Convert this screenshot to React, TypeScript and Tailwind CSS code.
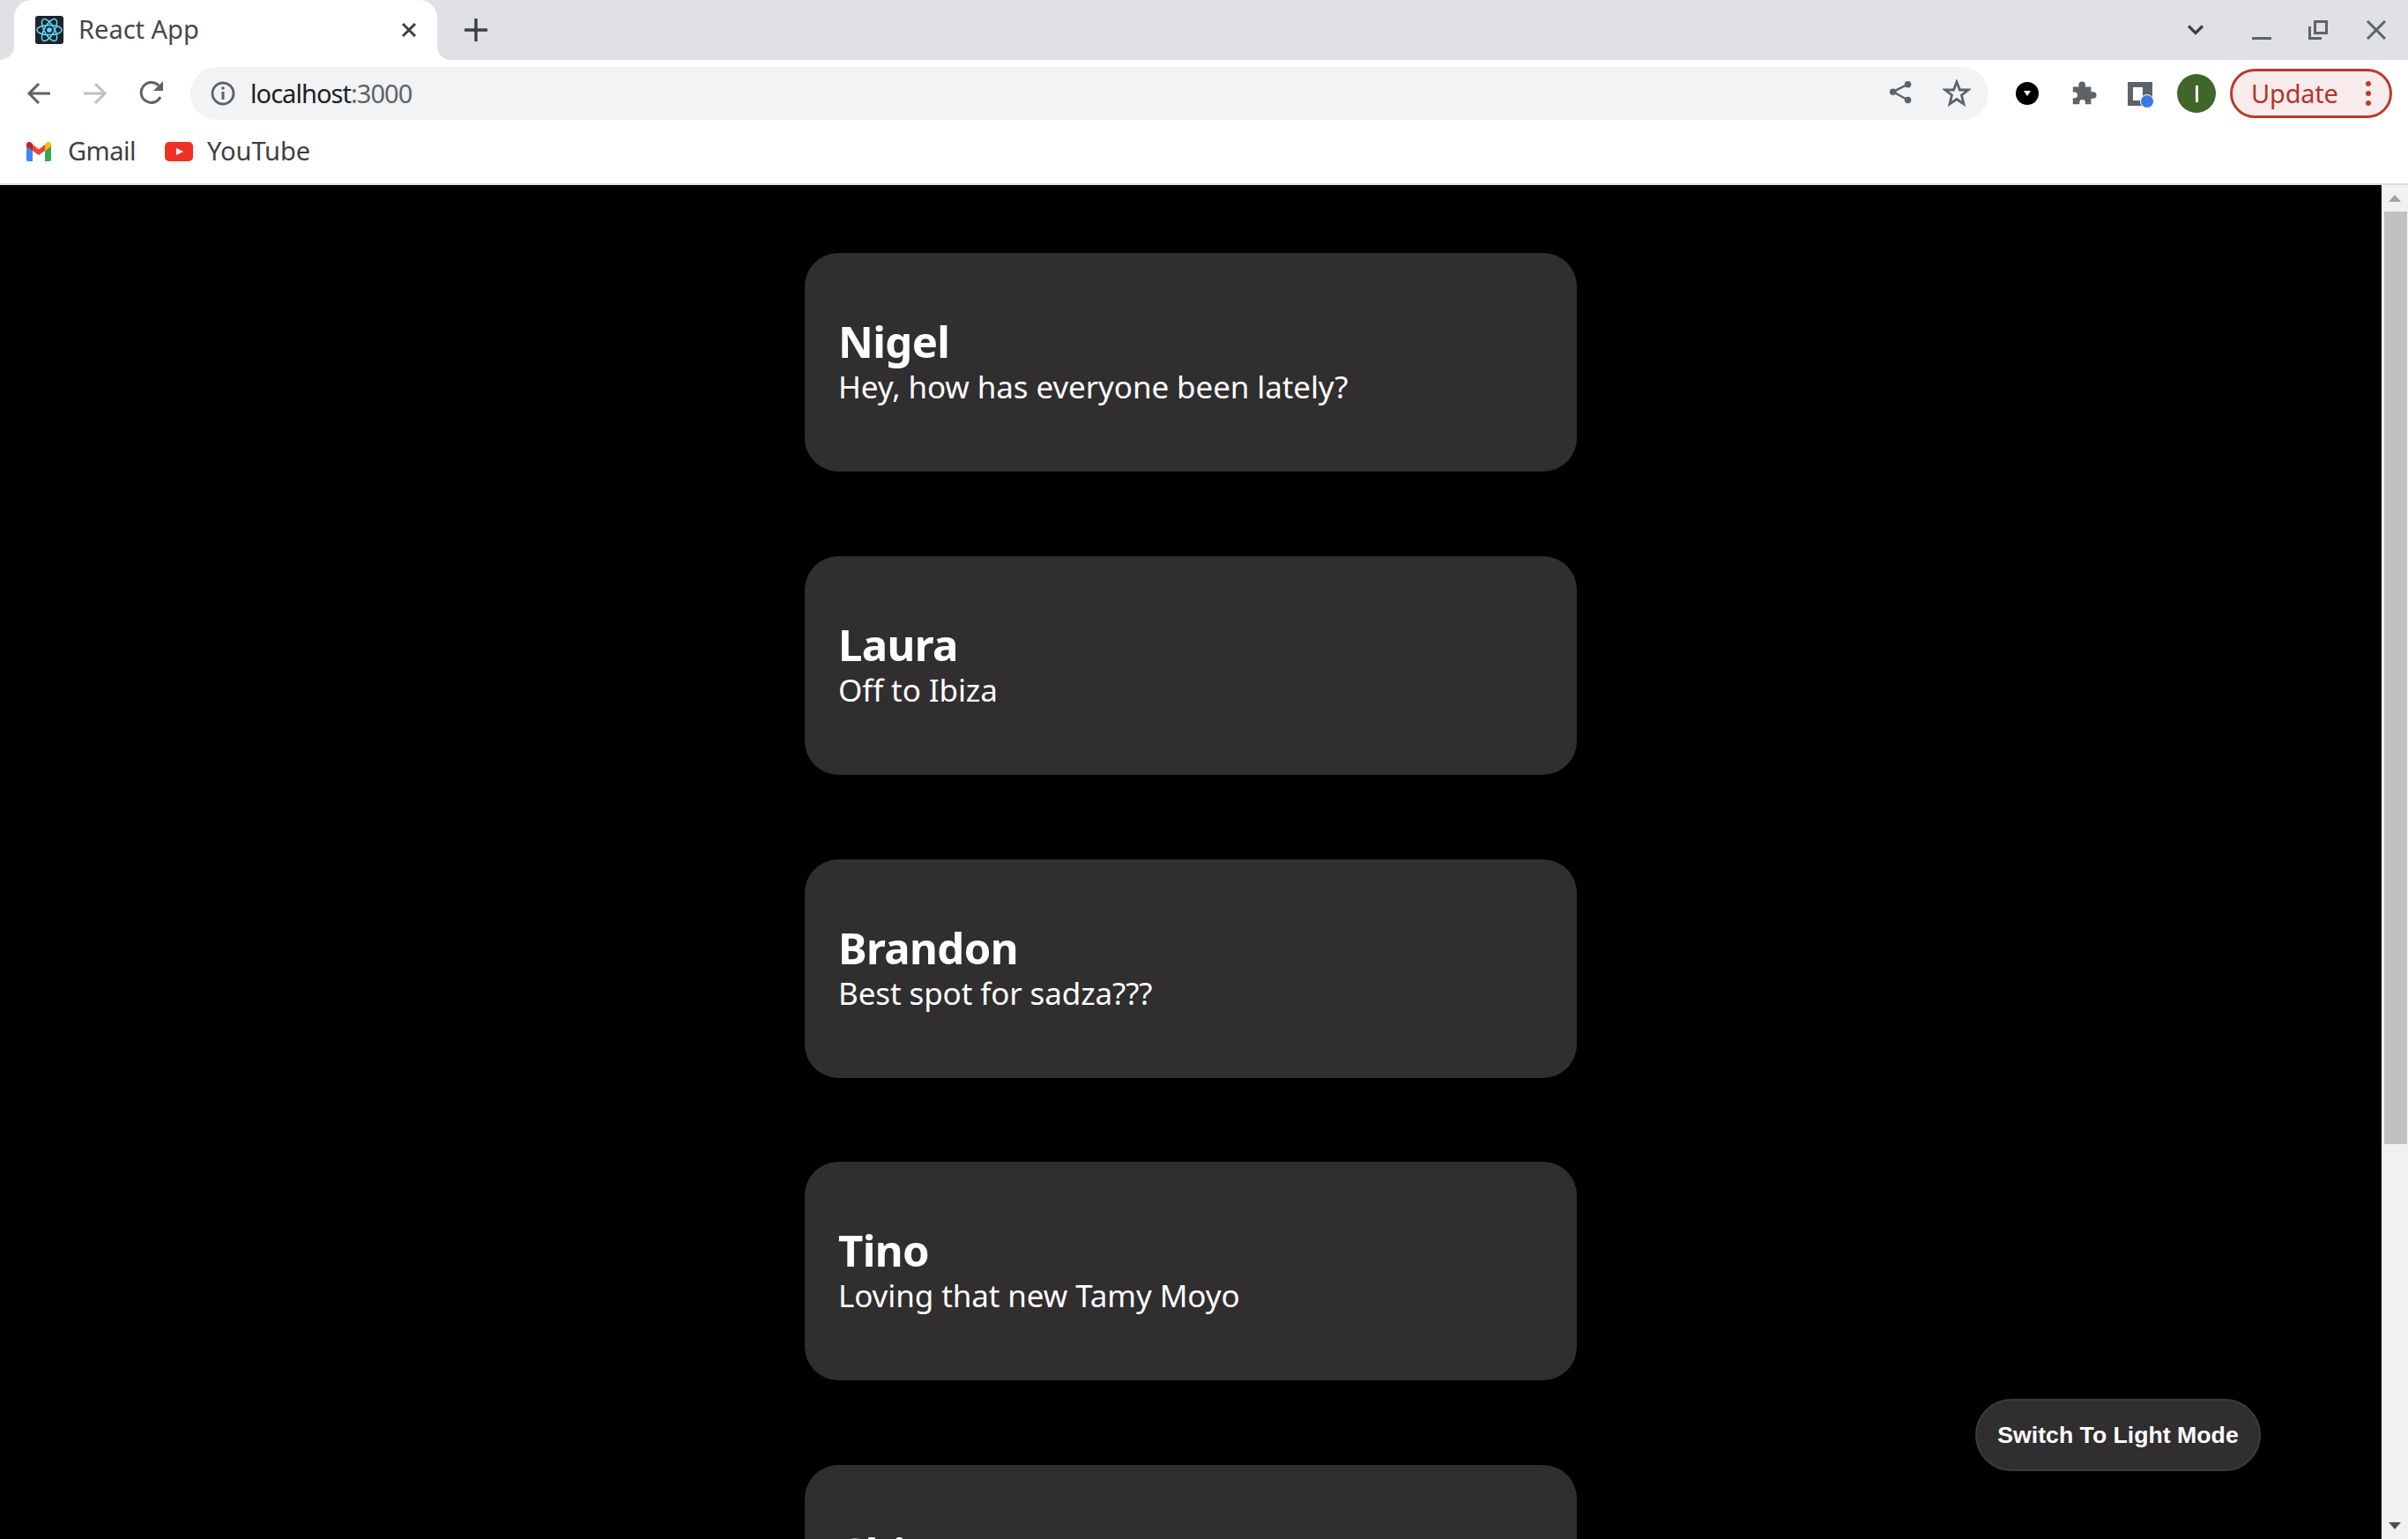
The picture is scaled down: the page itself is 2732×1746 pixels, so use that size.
import type { ReactNode } from 'react';

const messages = [
  { name: 'Nigel', text: 'Hey, how has everyone been lately?' },
  { name: 'Laura', text: 'Off to Ibiza' },
  { name: 'Brandon', text: 'Best spot for sadza???' },
  { name: 'Tino', text: 'Loving that new Tamy Moyo' },
  { name: 'Chipo', text: '' },
];

function Icon({ size, className, children }: { size: number; className?: string; children: ReactNode }) {
  return (
    <svg width={size} height={size} viewBox="0 0 32 32" fill="none" className={className}>
      {children}
    </svg>
  );
}

function ReactFavicon() {
  return (
    <svg width="32" height="32" viewBox="0 0 32 32" className="shrink-0">
      <rect width="32" height="32" rx="3" fill="#20232a" />
      <g stroke="#61dafb" strokeWidth="1.5" fill="none">
        <ellipse cx="16" cy="16" rx="14" ry="5.6" />
        <ellipse cx="16" cy="16" rx="14" ry="5.6" transform="rotate(60 16 16)" />
        <ellipse cx="16" cy="16" rx="14" ry="5.6" transform="rotate(120 16 16)" />
      </g>
      <circle cx="16" cy="16" r="2.8" fill="#61dafb" />
    </svg>
  );
}

function TabBar() {
  return (
    <div className="flex h-[68px] items-center bg-[#dfe1e5]">
      <div className="relative ml-4 flex h-[68px] w-[480px] items-center rounded-t-[20px] bg-white pl-6">
        <svg width="16" height="16" viewBox="0 0 16 16" className="absolute bottom-0 -left-4">
          <path d="M16 0V16H0C9 16 16 9 16 0Z" fill="#fff" />
        </svg>
        <svg width="16" height="16" viewBox="0 0 16 16" className="absolute -right-4 bottom-0">
          <path d="M0 0V16H16C7 16 0 9 0 0Z" fill="#fff" />
        </svg>
        <ReactFavicon />
        <span className="ml-[17px] pb-1 text-[29px] leading-none text-[#45474a]">React App</span>
        <svg width="18" height="18" viewBox="0 0 18 18" className="absolute top-[25px] left-[439px]">
          <path d="M2 2L16 16M16 2L2 16" stroke="#3c4043" strokeWidth="3" />
        </svg>
      </div>
      <svg width="26" height="26" viewBox="0 0 26 26" className="ml-[31px]">
        <path d="M13 1V25M1 13H25" stroke="#3c4043" strokeWidth="3.4" strokeLinecap="round" />
      </svg>
      <div className="ml-auto flex items-center">
        <svg width="20" height="14" viewBox="0 0 20 14" fill="none" className="mr-[54px]">
          <path d="M2 2.5L10 10.5L18 2.5" stroke="#3c4043" strokeWidth="3.2" />
        </svg>
        <svg width="22" height="22" viewBox="0 0 22 22" className="mr-[42px]">
          <rect x="0" y="19" width="22" height="3" fill="#5f6368" />
        </svg>
        <svg width="22" height="22" viewBox="0 0 22 22" className="mr-[44px]">
          <path d="M7.5 1.5H20.5V14.5H7.5Z M1.5 7V20.5H15" stroke="#5f6368" strokeWidth="3" fill="none" />
        </svg>
        <svg width="22" height="22" viewBox="0 0 22 22" className="mr-[25px]">
          <path d="M1 1L21 21M21 1L1 21" stroke="#5f6368" strokeWidth="3" />
        </svg>
      </div>
    </div>
  );
}

function ToolBar() {
  return (
    <div className="flex h-[72px] items-center bg-white pt-1">
      <div className="flex w-[216px] shrink-0 items-center pl-[29px]">
        <Icon size={32}>
          <path d="M28 16H4M15 5L4 16L15 27" stroke="#5f6368" strokeWidth="3" />
        </Icon>
        <Icon size={32} className="ml-[34px]">
          <path d="M0 16H24M13 5L24 16L13 27" stroke="#bdc1c6" strokeWidth="3" />
        </Icon>
        <Icon size={32} className="ml-[31px]">
          <path d="M24 20A11.5 11.5 0 1 1 22 7" stroke="#5f6368" strokeWidth="3" />
          <path d="M27 2V13H16Z" fill="#5f6368" />
        </Icon>
      </div>
      <div className="flex h-[60px] w-[2040px] shrink-0 items-center rounded-full bg-[#f1f3f4] pl-[22px]">
        <Icon size={32}>
          <circle cx="15" cy="16" r="12" stroke="#5f6368" strokeWidth="2.8" />
          <path d="M15 14V23" stroke="#5f6368" strokeWidth="3" />
          <circle cx="15" cy="10" r="1.8" fill="#5f6368" />
        </Icon>
        <span className="ml-[14px] pb-0.5 text-[29px] leading-none tracking-[-0.95px] text-[#202124]">
          localhost<span className="text-[#5f6368]">:3000</span>
        </span>
        <Icon size={30} className="mr-[83px] ml-auto">
          <g fill="#5f6368">
            <circle cx="23" cy="5" r="4" />
            <circle cx="5" cy="14" r="4" />
            <circle cx="23" cy="24" r="4" />
          </g>
          <path d="M23 5L5 14L23 24" stroke="#5f6368" strokeWidth="2.6" />
        </Icon>
      </div>
      <div className="relative flex-1">
        <Icon size={32} className="absolute top-[-16px] left-[-52px]">
          <path
            d="M16 3L19.5 12H29L21.5 18L24 28L16 22.5L8 28L10.5 18L3 12H12.5Z"
            stroke="#5f6368"
            strokeWidth="2.8"
            strokeLinejoin="miter"
          />
        </Icon>
        <svg width="26" height="26" viewBox="0 0 26 26" className="absolute top-[-13px] left-[31px]">
          <circle cx="13" cy="13" r="13" fill="#000" />
          <path d="M9 10H17L13 16Z" fill="#fff" />
        </svg>
        <Icon size={30} className="absolute top-[-15px] left-[93px]">
          <path
            d="M3 8H10V5.5A4 4 0 0 1 18 5.5V8H25V14H27.5A4 4 0 0 1 27.5 22H25V29H18V27A3.5 3.5 0 0 0 11 27V29H3V21.5H5A3.5 3.5 0 0 0 5 14.5H3Z"
            fill="#5f6368"
          />
        </Icon>
        <div className="absolute top-[-13px] left-[158px] h-[27px] w-[28px] border-[6px] border-r-[11px] border-[#5f6368] border-t-[#5f6368] bg-white" />
        <div className="absolute top-[1px] left-[172px] h-[16px] w-[16px] rounded-full border border-white bg-[#3b78e7]" />
        <div className="absolute top-[-22px] left-[214px] flex h-11 w-11 items-center justify-center rounded-full bg-[#41662a] text-[22px] leading-none text-white">
          <div className="h-[19px] w-[3px] bg-white" />
        </div>
        <div className="absolute top-[-28px] left-[274px] flex h-[56px] w-[184px] items-center rounded-full border-[3px] border-[#b93a30] bg-[#f7ebeb] pl-[21px] text-[29px] leading-none tracking-[-0.2px] text-[#b3352b]">
          <span className="pb-0.5">Update</span>
          <div className="mr-[21px] ml-auto flex flex-col gap-[5px]">
            <div className="h-[6px] w-[6px] rounded-full bg-[#c5392c]" />
            <div className="h-[6px] w-[6px] rounded-full bg-[#c5392c]" />
            <div className="h-[6px] w-[6px] rounded-full bg-[#c5392c]" />
          </div>
        </div>
      </div>
    </div>
  );
}

function BookmarksBar() {
  return (
    <div className="flex h-[70px] items-center border-b-2 border-[#dadce0] bg-white pb-1 pl-[30px] text-[29px] leading-none text-[#3c4043]">
      <svg width="28" height="22" viewBox="0 0 28 22" className="shrink-0">
        <path d="M0 3V20A2 2 0 0 0 2 22H7V10Z" fill="#4285f4" />
        <path d="M28 3V20A2 2 0 0 1 26 22H21V10Z" fill="#34a853" />
        <path d="M7 10L14 15L21 10V3L14 8.5L7 3Z" fill="#ea4335" />
        <path d="M0 3C0 0.5 3 -1 5 0.7L7 2.2V10L0 5Z" fill="#c5221f" />
        <path d="M28 3C28 0.5 25 -1 23 0.7L21 2.2V10L28 5Z" fill="#fbbc04" />
      </svg>
      <span className="ml-[19px] pb-[3px] tracking-[-0.5px]">Gmail</span>
      <svg width="32" height="22" viewBox="0 0 32 22" className="ml-[33px] shrink-0">
        <rect width="32" height="22" rx="5" fill="#ee3124" />
        <path d="M13 7L21 11L13 15Z" fill="#fff" />
      </svg>
      <span className="ml-4 pb-[3px]">YouTube</span>
    </div>
  );
}

function Scrollbar() {
  return (
    <div className="flex w-[30px] shrink-0 flex-col items-center bg-[#f1f1f1]">
      <svg width="14" height="8" viewBox="0 0 14 8" className="mt-[11px] shrink-0">
        <path d="M7 0L14 8H0Z" fill="#a3a3a3" />
      </svg>
      <div className="mt-[11px] ml-[2px] h-[1058px] w-[26px] bg-[#c1c1c1]" />
      <svg width="14" height="8" viewBox="0 0 14 8" className="mt-auto mb-[11px] shrink-0">
        <path d="M0 0H14L7 8Z" fill="#505050" />
      </svg>
    </div>
  );
}

function MessageCard({ name, text }: { name: string; text: string }) {
  return (
    <div className="flex h-[248px] w-[876px] shrink-0 flex-col justify-center rounded-[38px] bg-[#302e2f] px-[38px] text-white">
      <div className="mb-1 text-[49px] leading-[52px] font-bold tracking-[-0.6px]">{name}</div>
      <div className="min-h-[44px] text-[35px] leading-[44px] tracking-[-0.1px]">{text}</div>
    </div>
  );
}

export default function App() {
  return (
    <div className="flex h-[1746px] w-[2732px] flex-col overflow-hidden bg-black font-['Noto_Sans',sans-serif]">
      <TabBar />
      <ToolBar />
      <BookmarksBar />
      <div className="relative flex min-h-0 flex-1">
        <div className="flex flex-1 flex-col items-center gap-[95.75px] overflow-hidden bg-black pt-[77px]">
          {messages.map((m) => (
            <MessageCard key={m.name} name={m.name} text={m.text} />
          ))}
        </div>
        <Scrollbar />
        <button className="absolute right-[167px] bottom-[77px] h-[82px] w-[324px] rounded-full border-2 border-[#3d3b3c] bg-[#302e2f] font-['Liberation_Sans',sans-serif] text-[26.67px] font-bold text-white">
          Switch To Light Mode
        </button>
      </div>
    </div>
  );
}
